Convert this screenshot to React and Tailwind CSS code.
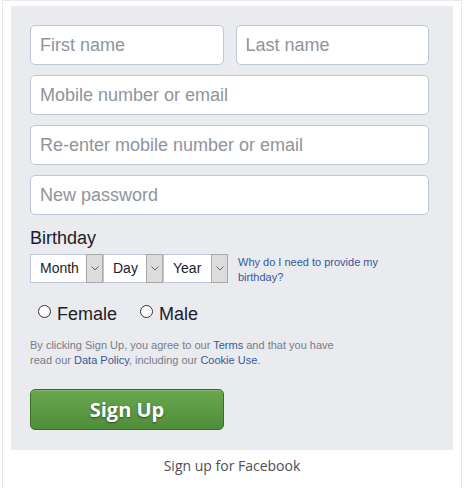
import React from "react";

const Field = ({ placeholder, className = "" }) => (
    <div
        className={`h-10 rounded-[5px] border border-[#bdc7d8] bg-white px-[9px] flex items-center text-[18px] text-[#90949c] ${className}`}
    >
        {placeholder}
    </div>
);

const SelectBox = ({ label, width }) => (
    <div className={`flex h-[29px] border border-[#bdc7d8] bg-white ${width}`}>
        <div className="flex-1 flex items-center pl-[9px] text-[14px] text-[#1d2129]">
            {label}
        </div>
        <div className="w-[17px] bg-[#dcdcdc] border border-[#a9a9a9] -my-px -mr-px flex items-center justify-center">
            <svg width="8" height="5" viewBox="0 0 8 5">
                <path d="M0.5 0.5 L4 4 L7.5 0.5" fill="none" stroke="#666" strokeWidth="1" />
            </svg>
        </div>
    </div>
);

const Radio = ({ label }) => (
    <label className="flex items-start gap-[6px]">
        <span className="mt-[2px] w-[13px] h-[13px] rounded-full border border-[#333] bg-white" />
        <span className="text-[18px] leading-[22px] text-[#1d2129]">{label}</span>
    </label>
);

const App = () => {
    return (
        <div className="w-[460px] ml-[2px] border border-b-0 border-[#e9e9e9] px-2 pt-[5px] pb-6 font-['Liberation_Sans',Arial,sans-serif]">
            <div className="bg-[#e9ebee] pl-[19px] pr-6 pt-[19px] pb-[20px]">
                <div className="flex flex-col gap-[10px]">
                    <div className="flex gap-3">
                        <Field placeholder="First name" className="flex-1" />
                        <Field placeholder="Last name" className="flex-1" />
                    </div>
                    <Field placeholder="Mobile number or email" />
                    <Field placeholder="Re-enter mobile number or email" />
                    <Field placeholder="New password" />
                </div>

                <div className="mt-[13px] text-[18px] leading-[20px] text-[#1d2129]">Birthday</div>
                <div className="mt-[6px] flex items-start">
                    <SelectBox label="Month" width="w-[73px]" />
                    <SelectBox label="Day" width="w-[60px]" />
                    <SelectBox label="Year" width="w-[65px]" />
                    <a className="ml-[10px] mt-[1px] w-[150px] text-[11px] leading-[15px] text-[#365899]">
                        Why do I need to provide my birthday?
                    </a>
                </div>

                <div className="mt-[18px] flex gap-[23px] pl-2">
                    <Radio label="Female" />
                    <Radio label="Male" />
                </div>

                <p className="mt-[13px] text-[11px] leading-[15px] text-[#777d88]">
                    By clicking Sign Up, you agree to our <a className="text-[#365899]">Terms</a> and that you have
                    <br />
                    read our <a className="text-[#365899]">Data Policy</a>, including our{" "}
                    <a className="text-[#365899]">Cookie Use</a>.
                </p>

                <button className="mt-[21px] w-[194px] h-[41px] rounded-[5px] border border-[#3b6e22] bg-gradient-to-b from-[#69a74e] to-[#4f8d3a] text-white text-[20px] font-bold font-['Open_Sans',sans-serif] [text-shadow:0_1px_2px_rgba(0,0,0,0.5)] shadow-[inset_0_1px_1px_rgba(255,255,255,0.2)]">
                    Sign Up
                </button>
            </div>
            <div className="mt-[5px] text-center text-[14px] text-[#4b4f56] font-['Open_Sans',sans-serif]">
                Sign up for Facebook
            </div>
        </div>
    );
};

export default App;
